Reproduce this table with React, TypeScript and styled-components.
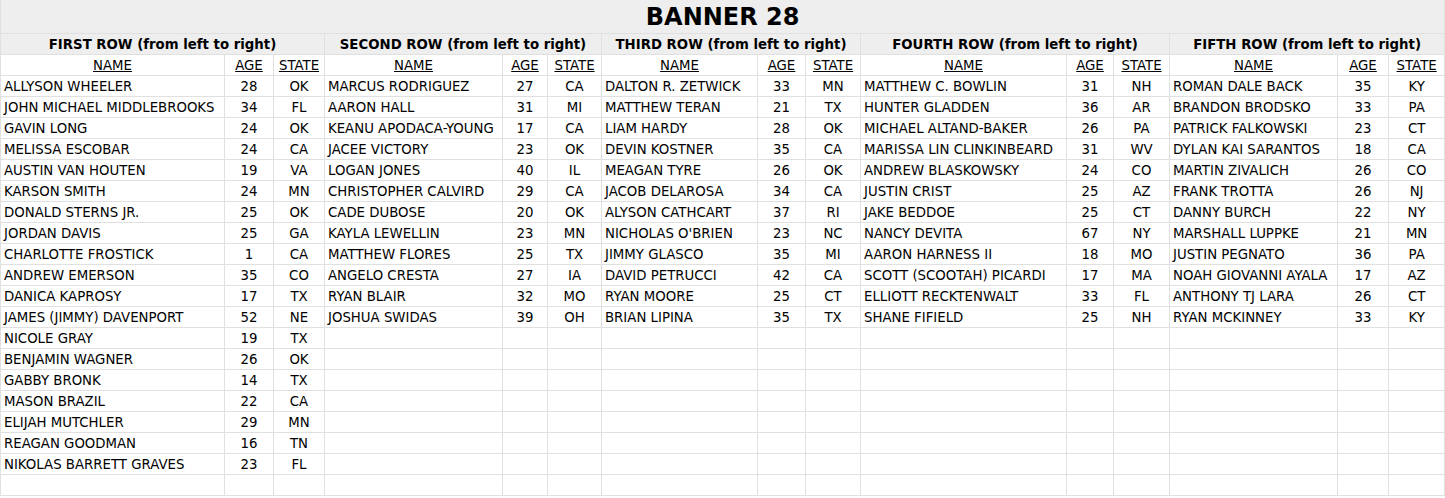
import styled, { createGlobalStyle } from "styled-components";

const GlobalStyle = createGlobalStyle`
  html, body {
    margin: 0;
    padding: 0;
    background: #fff;
  }
  body {
    font-family: "DejaVu Sans", Verdana, sans-serif;
    color: #000;
  }
`;

const Sheet = styled.table`
  border-collapse: collapse;
  table-layout: fixed;
  width: 1444px;
  font-size: 13.3px;
`;

const TitleCell = styled.th`
  height: 33px;
  padding: 0;
  background: #eeeeee;
  border: 1px solid #e0e0e0;
  border-top: none;
  font-size: 24px;
  font-weight: bold;
  text-align: center;
  vertical-align: middle;
`;

const GroupCell = styled.th`
  height: 20px;
  padding: 0 3px;
  background: #eeeeee;
  border: 1px solid #e0e0e0;
  font-weight: bold;
  text-align: center;
  white-space: nowrap;
  overflow: hidden;
`;

const ColHeadCell = styled.th`
  height: 20px;
  padding: 0 3px;
  border: 1px solid #e0e0e0;
  font-weight: normal;
  text-decoration: underline;
  text-align: center;
  white-space: nowrap;
`;

const Cell = styled.td<{ $align?: "left" | "center" }>`
  height: 20px;
  padding: 0 3px;
  border: 1px solid #e0e0e0;
  text-align: ${(p) => p.$align ?? "left"};
  white-space: nowrap;
  overflow: hidden;
`;

type Person = [string, number, string];

const groups: { title: string; widths: number[]; people: Person[] }[] = [
  {
    title: "FIRST ROW (from left to right)",
    widths: [224, 49, 51],
    people: [
      ["ALLYSON WHEELER", 28, "OK"],
      ["JOHN MICHAEL MIDDLEBROOKS", 34, "FL"],
      ["GAVIN LONG", 24, "OK"],
      ["MELISSA ESCOBAR", 24, "CA"],
      ["AUSTIN VAN HOUTEN", 19, "VA"],
      ["KARSON SMITH", 24, "MN"],
      ["DONALD STERNS JR.", 25, "OK"],
      ["JORDAN DAVIS", 25, "GA"],
      ["CHARLOTTE FROSTICK", 1, "CA"],
      ["ANDREW EMERSON", 35, "CO"],
      ["DANICA KAPROSY", 17, "TX"],
      ["JAMES (JIMMY) DAVENPORT", 52, "NE"],
      ["NICOLE GRAY", 19, "TX"],
      ["BENJAMIN WAGNER", 26, "OK"],
      ["GABBY BRONK", 14, "TX"],
      ["MASON BRAZIL", 22, "CA"],
      ["ELIJAH MUTCHLER", 29, "MN"],
      ["REAGAN GOODMAN", 16, "TN"],
      ["NIKOLAS BARRETT GRAVES", 23, "FL"],
    ],
  },
  {
    title: "SECOND ROW (from left to right)",
    widths: [178, 45, 54],
    people: [
      ["MARCUS RODRIGUEZ", 27, "CA"],
      ["AARON HALL", 31, "MI"],
      ["KEANU APODACA-YOUNG", 17, "CA"],
      ["JACEE VICTORY", 23, "OK"],
      ["LOGAN JONES", 40, "IL"],
      ["CHRISTOPHER CALVIRD", 29, "CA"],
      ["CADE DUBOSE", 20, "OK"],
      ["KAYLA LEWELLIN", 23, "MN"],
      ["MATTHEW FLORES", 25, "TX"],
      ["ANGELO CRESTA", 27, "IA"],
      ["RYAN BLAIR", 32, "MO"],
      ["JOSHUA SWIDAS", 39, "OH"],
    ],
  },
  {
    title: "THIRD ROW (from left to right)",
    widths: [156, 48, 55],
    people: [
      ["DALTON R. ZETWICK", 33, "MN"],
      ["MATTHEW TERAN", 21, "TX"],
      ["LIAM HARDY", 28, "OK"],
      ["DEVIN KOSTNER", 35, "CA"],
      ["MEAGAN TYRE", 26, "OK"],
      ["JACOB DELAROSA", 34, "CA"],
      ["ALYSON CATHCART", 37, "RI"],
      ["NICHOLAS O'BRIEN", 23, "NC"],
      ["JIMMY GLASCO", 35, "MI"],
      ["DAVID PETRUCCI", 42, "CA"],
      ["RYAN MOORE", 25, "CT"],
      ["BRIAN LIPINA", 35, "TX"],
    ],
  },
  {
    title: "FOURTH ROW (from left to right)",
    widths: [206, 47, 56],
    people: [
      ["MATTHEW C. BOWLIN", 31, "NH"],
      ["HUNTER GLADDEN", 36, "AR"],
      ["MICHAEL ALTAND-BAKER", 26, "PA"],
      ["MARISSA LIN CLINKINBEARD", 31, "WV"],
      ["ANDREW BLASKOWSKY", 24, "CO"],
      ["JUSTIN CRIST", 25, "AZ"],
      ["JAKE BEDDOE", 25, "CT"],
      ["NANCY DEVITA", 67, "NY"],
      ["AARON HARNESS II", 18, "MO"],
      ["SCOTT (SCOOTAH) PICARDI", 17, "MA"],
      ["ELLIOTT RECKTENWALT", 33, "FL"],
      ["SHANE FIFIELD", 25, "NH"],
    ],
  },
  {
    title: "FIFTH ROW (from left to right)",
    widths: [168, 51, 56],
    people: [
      ["ROMAN DALE BACK", 35, "KY"],
      ["BRANDON BRODSKO", 33, "PA"],
      ["PATRICK FALKOWSKI", 23, "CT"],
      ["DYLAN KAI SARANTOS", 18, "CA"],
      ["MARTIN ZIVALICH", 26, "CO"],
      ["FRANK TROTTA", 26, "NJ"],
      ["DANNY BURCH", 22, "NY"],
      ["MARSHALL LUPPKE", 21, "MN"],
      ["JUSTIN PEGNATO", 36, "PA"],
      ["NOAH GIOVANNI AYALA", 17, "AZ"],
      ["ANTHONY TJ LARA", 26, "CT"],
      ["RYAN MCKINNEY", 33, "KY"],
    ],
  },
];

const ROWS = 20;

export default function App() {
  return (
    <>
      <GlobalStyle />
      <Sheet>
        <colgroup>
          {groups.flatMap((g, gi) =>
            g.widths.map((w, wi) => <col key={`${gi}-${wi}`} style={{ width: w }} />)
          )}
        </colgroup>
        <thead>
          <tr>
            <TitleCell colSpan={15}>BANNER 28</TitleCell>
          </tr>
          <tr>
            {groups.map((g) => (
              <GroupCell key={g.title} colSpan={3}>
                {g.title}
              </GroupCell>
            ))}
          </tr>
          <tr>
            {groups.map((g) => [
              <ColHeadCell key={g.title + "n"}>NAME</ColHeadCell>,
              <ColHeadCell key={g.title + "a"}>AGE</ColHeadCell>,
              <ColHeadCell key={g.title + "s"}>STATE</ColHeadCell>,
            ])}
          </tr>
        </thead>
        <tbody>
          {Array.from({ length: ROWS }).map((_, r) => (
            <tr key={r}>
              {groups.map((g) => {
                const p = g.people[r];
                return [
                  <Cell key={g.title + "n"}>{p ? p[0] : ""}</Cell>,
                  <Cell key={g.title + "a"} $align="center">
                    {p ? p[1] : ""}
                  </Cell>,
                  <Cell key={g.title + "s"} $align="center">
                    {p ? p[2] : ""}
                  </Cell>,
                ];
              })}
            </tr>
          ))}
        </tbody>
      </Sheet>
    </>
  );
}
